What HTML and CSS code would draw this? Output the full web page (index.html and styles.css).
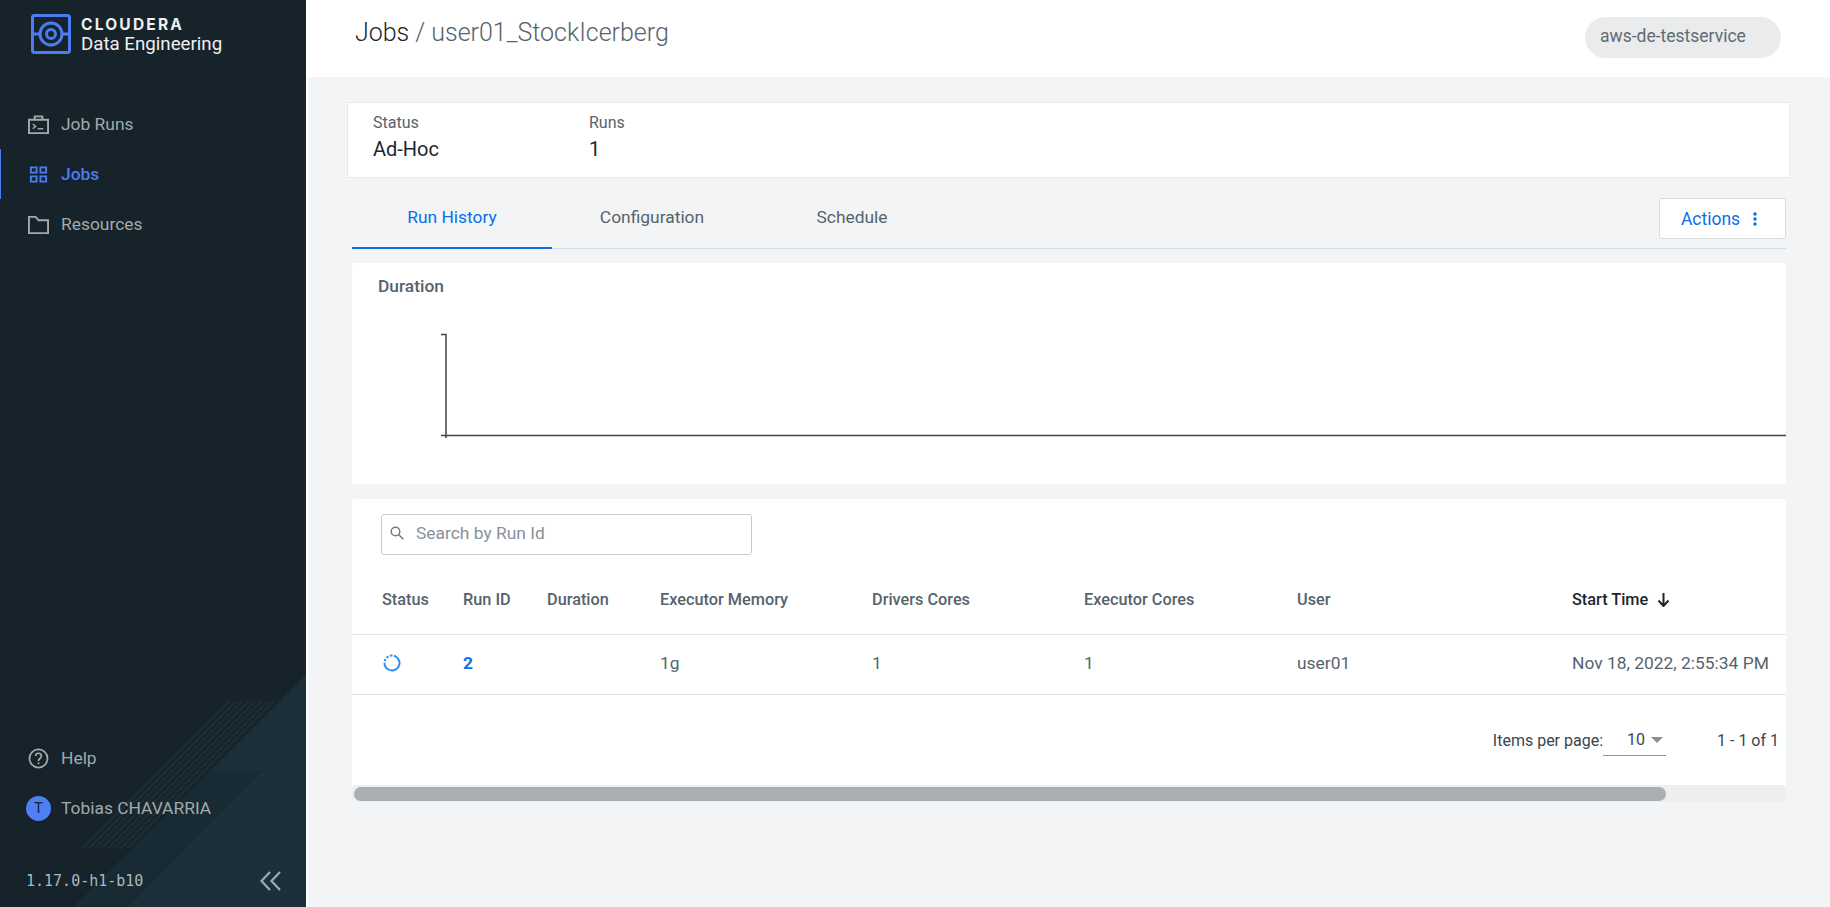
FILE: index.html
```html
<!DOCTYPE html>
<html lang="en">

<head>
    <meta charset="UTF-8">
    <title>Jobs</title>
    <link rel="stylesheet" href="styles.css">
</head>

<body>
    <aside class="sidebar">
        <svg class="sideArt" viewBox="0 0 306 907">
            <defs>
                <pattern id="stripes" width="4.500" height="6" patternUnits="userSpaceOnUse" patternTransform="rotate(45)">
                    <rect width="2" height="6" fill="#1b2f39" />
                </pattern>
            </defs>
            <polygon points="210,771 262,771 128,907 73,907" fill="#182a33" />
            <polygon points="306,675 210,771 262,771 128,907 306,907" fill="#1b303a" />
            <polygon points="226,701 277,701 132,848 80,848" fill="url(#stripes)" />
        </svg>

        <div class="brand">
            <svg class="brandMark" viewBox="0 0 40 40">
                <rect x="1.500" y="1.500" width="37" height="37" rx="2" fill="none" stroke="#4d7cf2" stroke-width="3" />
                <circle cx="20" cy="20" r="11" fill="none" stroke="#4d7cf2" stroke-width="3" />
                <circle cx="20" cy="20" r="4.500" fill="none" stroke="#4d7cf2" stroke-width="3" />
                <path d="M2 20h7M31 20h7" stroke="#4d7cf2" stroke-width="3" />
            </svg>
            <div class="brandText">
                <div class="brandName">CLOUDERA</div>
                <div class="brandSub">Data Engineering</div>
            </div>
        </div>

        <nav class="nav">
            <a class="navItem">
                <svg class="navIcon" viewBox="0 0 22 20" fill="none" stroke="#a3a9ac" stroke-width="2">
                    <path d="M1 5h20v14H1z" />
                    <path d="M7 5V1.500h8V5" />
                    <path d="M5 9.500l3 2.500-3 2.500" stroke-width="1.500" />
                    <path d="M10 14.500h6" stroke-width="1.500" />
                </svg>
                <span>Job Runs</span>
            </a>
            <a class="navItem navActive">
                <svg class="navIcon" viewBox="0 0 22 20" fill="none" stroke="#4d7cf2" stroke-width="2">
                    <path d="M3 2.500h6v5.500H3zM13 2.500h6v5.500h-6zM3 12h6v5.500H3zM13 12h6v5.500h-6z" />
                </svg>
                <span>Jobs</span>
            </a>
            <a class="navItem">
                <svg class="navIcon" viewBox="0 0 22 20" fill="none" stroke="#a3a9ac" stroke-width="2">
                    <path d="M1 19V2h7l3 3.500h10V19z" />
                </svg>
                <span>Resources</span>
            </a>
        </nav>

        <div class="sideBottom">
            <a class="navItem">
                <svg class="navIcon" viewBox="0 0 22 22" fill="none" stroke="#a3a9ac" stroke-width="1.800">
                    <circle cx="11" cy="11" r="9.500" />
                    <path d="M8 8.500c0-4 6-4 6 0 0 2.500-3 2.500-3 5" />
                    <path d="M11 15v2" />
                </svg>
                <span>Help</span>
            </a>
            <a class="navItem">
                <span class="avatar">T</span>
                <span>Tobias CHAVARRIA</span>
            </a>
            <div class="sideFoot">
                <span class="version">1.17.0-h1-b10</span>
                <svg class="collapse" viewBox="0 0 21 20" fill="none" stroke="#a3a9ac" stroke-width="2.200">
                    <path d="M10 1L1.500 10 10 19M20 1l-8.500 9 8.500 9" />
                </svg>
            </div>
        </div>
    </aside>

    <main class="main">
        <header class="topbar">
            <h1 class="title"><span class="crumb">Jobs</span> / user01_StockIcerberg</h1>
            <div class="pill">aws-de-testservice</div>
        </header>

        <div class="content">
            <section class="summary">
                <div class="stat statFirst">
                    <div class="statLabel">Status</div>
                    <div class="statValue">Ad-Hoc</div>
                </div>
                <div class="stat">
                    <div class="statLabel">Runs</div>
                    <div class="statValue">1</div>
                </div>
            </section>

            <div class="inner">
                <div class="tabBar">
                    <a class="tab tabActive">Run History</a>
                    <a class="tab">Configuration</a>
                    <a class="tab">Schedule</a>
                    <button class="actions">Actions
                        <svg class="kebab" viewBox="0 0 4 14" fill="#0a6fe8">
                            <circle cx="2" cy="2" r="1.700" />
                            <circle cx="2" cy="7" r="1.700" />
                            <circle cx="2" cy="12" r="1.700" />
                        </svg>
                    </button>
                </div>

                <section class="card chartCard">
                    <h2 class="chartTitle">Duration</h2>
                    <svg class="chart" height="106">
                        <path d="M89 1.500h5V105M89 102.500H1434" fill="none" stroke="#444" stroke-width="1.500" />
                    </svg>
                </section>

                <section class="card tableCard">
                    <div class="search">
                        <svg class="searchIcon" viewBox="0 0 14 14" fill="none" stroke="#6f7a82" stroke-width="1.500">
                            <circle cx="5.500" cy="5.500" r="4.300" />
                            <path d="M8.800 8.800l4.500 4.500" />
                        </svg>
                        <span>Search by Run Id</span>
                    </div>

                    <div class="row headRow">
                        <div>Status</div>
                        <div>Run ID</div>
                        <div>Duration</div>
                        <div>Executor Memory</div>
                        <div>Drivers Cores</div>
                        <div>Executor Cores</div>
                        <div>User</div>
                        <div class="sorted">Start Time
                            <svg class="sortIcon" viewBox="0 0 12 14" fill="none" stroke="#1b2730" stroke-width="2">
                                <path d="M6 0v12.500M1 7.500l5 5.500 5-5.500" />
                            </svg>
                        </div>
                    </div>

                    <div class="row bodyRow">
                        <div><svg class="spinner" viewBox="0 0 18 18" fill="none" stroke="#2b8ff2" stroke-width="2">
                                <circle cx="9" cy="9" r="7.500" transform="rotate(-60 9 9)" stroke-dasharray="31.400 1.500 2.500 1.500 2.500 1.500 2.500 1.500 2 0" />
                            </svg></div>
                        <div class="runLink">2</div>
                        <div></div>
                        <div>1g</div>
                        <div>1</div>
                        <div>1</div>
                        <div>user01</div>
                        <div>Nov 18, 2022, 2:55:34 PM</div>
                    </div>

                    <div class="pager">
                        <span>Items per page:</span>
                        <div class="pageSelect">
                            <span>10</span>
                            <span class="caret"></span>
                        </div>
                        <span class="pageRange">1 - 1 of 1</span>
                    </div>

                    <div class="scrollTrack">
                        <div class="scrollThumb"></div>
                    </div>
                </section>
            </div>
        </div>
    </main>
</body>

</html>
```

FILE: styles.css
```css
* {
    box-sizing: border-box;
}

body {
    margin: 0;
    height: 907px;
    display: flex;
    overflow: hidden;
    font-family: Roboto, "Liberation Sans", sans-serif;
    background: #f3f4f6;
}

/* sidebar */
.sidebar {
    width: 306px;
    height: 907px;
    flex-shrink: 0;
    position: relative;
    display: flex;
    flex-direction: column;
    background: #16232b;
    color: #a3a9ac;
}

.sideArt {
    position: absolute;
    left: 0;
    top: 0;
    width: 306px;
    height: 907px;
}

.brand {
    position: relative;
    display: flex;
    gap: 10px;
    padding: 14px 0 0 31px;
    height: 99px;
}

.brandMark {
    width: 40px;
    height: 40px;
}

.brandText {
    color: #eef0f1;
    padding-top: 2px;
}

.brandName {
    font-family: Inter, Roboto, sans-serif;
    font-weight: 700;
    font-size: 15.5px;
    letter-spacing: 2.2px;
    line-height: 18px;
}

.brandSub {
    font-size: 18.7px;
    line-height: 21px;
}

.nav {
    position: relative;
}

.navItem {
    display: flex;
    align-items: center;
    height: 50px;
    padding-left: 28px;
    font-size: 17.4px;
}

.navIcon {
    width: 21px;
    height: 21px;
    margin-right: 12px;
}

.navActive {
    color: #4d7cf2;
    font-weight: 500;
    box-shadow: inset 1px 0 0 #4d7cf2;
}

.sideBottom {
    position: relative;
    margin-top: auto;
}

.avatar {
    width: 25px;
    height: 25px;
    margin: 0 10px 0 -2px;
    border-radius: 50%;
    background: #4f7ff5;
    color: #16232b;
    font-size: 15px;
    display: flex;
    align-items: center;
    justify-content: center;
}

.sideFoot {
    display: flex;
    align-items: center;
    justify-content: space-between;
    height: 74px;
    padding: 22px 25px 0 26px;
}

.version {
    font-family: "DejaVu Sans Mono", monospace;
    font-size: 15px;
    color: #a8b8bd;
}

.collapse {
    width: 21px;
    height: 20px;
}

/* top bar */
.main {
    flex: 1;
    min-width: 0;
    display: flex;
    flex-direction: column;
}

.topbar {
    height: 77px;
    flex-shrink: 0;
    background: #fff;
    display: flex;
    justify-content: space-between;
    padding: 18px 49px 0 49px;
}

.title {
    margin: 0;
    font-size: 25px;
    font-weight: 300;
    line-height: 30px;
    letter-spacing: -0.02px;
    color: #56636c;
}

.crumb {
    color: #1b2730;
}

.pill {
    width: 196px;
    height: 41px;
    margin-top: -1px;
    border-radius: 21px;
    background: #e9ebed;
    color: #5f6b73;
    font-size: 17.5px;
    line-height: 38px;
    padding-left: 15px;
}

.content {
    flex: 1;
    padding: 25px 40px 0 39px;
    border-left: 2px solid #fff;
}

.summary {
    height: 76px;
    background: #fff;
    border: 1px solid #e6e8ea;
    display: flex;
    padding: 10px 0 0 25px;
}

.stat {
    width: 216px;
}

.statLabel {
    font-size: 16px;
    line-height: 20px;
    color: #56636c;
}

.statValue {
    font-size: 20px;
    line-height: 32px;
    color: #1b2730;
}

.inner {
    margin: 0 4px 0 5px;
}

/* tabs */
.tabBar {
    height: 71px;
    display: flex;
    border-bottom: 1px solid #d8dbde;
    position: relative;
}

.tab {
    width: 200px;
    height: 71px;
    padding-top: 29px;
    text-align: center;
    font-size: 17.4px;
    line-height: 20px;
    color: #56636c;
}

.tabActive {
    color: #0a6fe8;
    border-bottom: 2px solid #0a6fe8;
}

.actions {
    margin: 20px 0 0 auto;
    width: 127px;
    height: 41px;
    padding: 0 7px 0 0;
    background: #fff;
    border: 1px solid #d8dbde;
    border-radius: 3px;
    font-family: inherit;
    font-size: 17.5px;
    color: #0a6fe8;
    display: flex;
    align-items: center;
    justify-content: center;
    gap: 13px;
}

.kebab {
    width: 4px;
    height: 14px;
}

.card {
    background: #fff;
    border-radius: 3px;
}

.chartCard {
    height: 221px;
    margin-top: 14px;
    padding: 13px 0 0 26px;
}

.chartTitle {
    margin: 0;
    font-size: 17.4px;
    font-weight: 500;
    line-height: 20px;
    color: #56636c;
}

.chart {
    display: block;
    width: 1434px;
    margin: 37px 0 0 -26px;
}

/* table */
.tableCard {
    margin-top: 15px;
    padding-top: 15px;
}

.search {
    width: 371px;
    height: 41px;
    margin-left: 29px;
    padding: 0 0 4px 8px;
    border: 1px solid #c8ccd0;
    border-radius: 3px;
    display: flex;
    align-items: center;
    gap: 10px;
    font-size: 17.4px;
    color: #87919a;
}

.searchIcon {
    width: 14px;
    height: 14px;
    margin-right: 2px;
}

.row {
    display: grid;
    grid-template-columns: 81px 84px 113px 212px 212px 213px 275px 1fr;
    padding-left: 30px;
    border-bottom: 1px solid #dfe1e3;
    align-items: center;
    font-size: 17.4px;
    color: #56636c;
}

.headRow {
    height: 80px;
    padding-top: 10px;
    font-size: 16.3px;
    font-weight: 500;
}

.bodyRow {
    height: 60px;
    padding-bottom: 3px;
}

.sorted {
    color: #1b2730;
    display: flex;
    align-items: center;
    gap: 9px;
}

.sortIcon {
    width: 13px;
    height: 14px;
}

.spinner {
    display: block;
    width: 18px;
    height: 18px;
    margin-left: 1px;
}

.runLink {
    color: #0a6fe8;
    font-weight: 700;
}

.pager {
    height: 90px;
    display: flex;
    align-items: center;
    justify-content: flex-end;
    padding: 0 7px 0 0;
    font-size: 16px;
    color: #3a464f;
}

.pageSelect {
    width: 63px;
    height: 28px;
    margin: 3px 0 0;
    border-bottom: 1px solid #8a9299;
    display: flex;
    align-items: center;
    justify-content: flex-end;
    gap: 6px;
    padding: 0 3px 3px 0;
}

.caret {
    border-left: 6px solid transparent;
    border-right: 6px solid transparent;
    border-top: 6px solid #8a8f93;
}

.pageRange {
    margin-left: 51px;
}

.scrollTrack {
    height: 17px;
    padding: 2px 0 1px 2px;
    background: #eceef0;
    border-radius: 4px;
}

.scrollThumb {
    width: 1312px;
    height: 14px;
    background: #a9afb3;
    border-radius: 7px;
}
```
